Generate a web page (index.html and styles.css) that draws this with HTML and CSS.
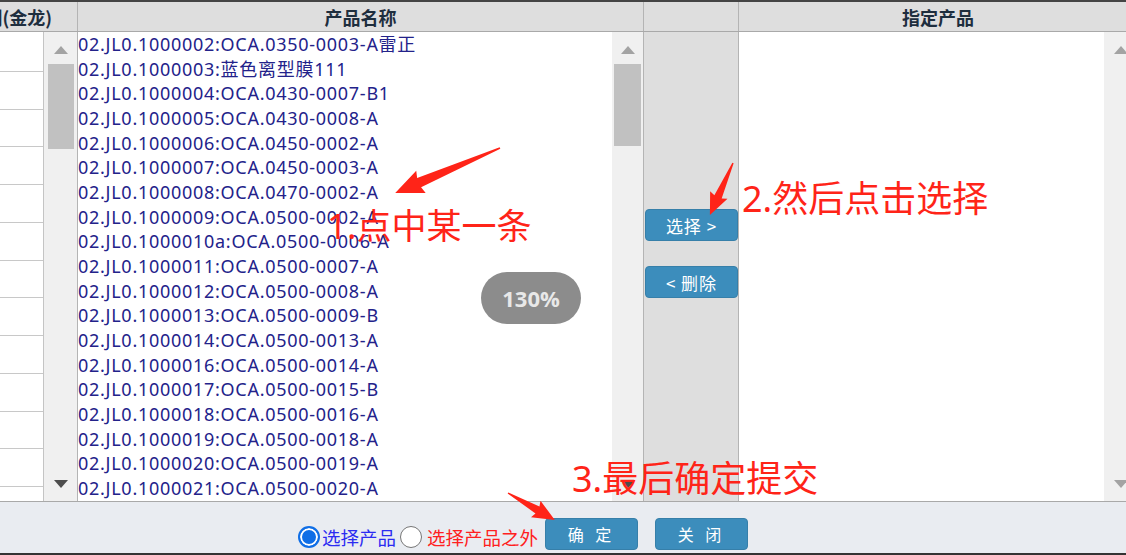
FILE: index.html
```html
<!DOCTYPE html>
<html lang="zh-CN">
<head>
    <meta charset="UTF-8">
    <title>指定产品</title>
    <link rel="stylesheet" href="styles.css">
</head>
<body>

<div class="window">
    <div class="topline"></div>

    <!-- 表头 -->
    <div class="grid head">
        <div class="cell col-type type-head"><span>产品类别(金龙)</span></div>
        <div class="cell col-list">产品名称</div>
        <div class="cell col-mid"></div>
        <div class="cell col-pick">指定产品</div>
    </div>

    <!-- 列表区 -->
    <div class="grid body">
        <div class="cell col-type type-body">
            <div class="type-rows">
                <div class="type-row"></div><div class="type-row"></div><div class="type-row"></div>
                <div class="type-row"></div><div class="type-row"></div><div class="type-row"></div>
                <div class="type-row"></div><div class="type-row"></div><div class="type-row"></div>
                <div class="type-row"></div><div class="type-row"></div><div class="type-row"></div>
                <div class="type-row"></div>
            </div>
            <div class="scrollbar wide">
                <span class="arrow up"></span>
                <span class="thumb tall"></span>
                <span class="arrow down"></span>
            </div>
        </div>

        <div class="cell col-list list-body">
            <ul class="items">
                <li>02.JL0.1000002:OCA.0350-0003-A雷正</li>
                <li>02.JL0.1000003:蓝色离型膜111</li>
                <li>02.JL0.1000004:OCA.0430-0007-B1</li>
                <li>02.JL0.1000005:OCA.0430-0008-A</li>
                <li>02.JL0.1000006:OCA.0450-0002-A</li>
                <li>02.JL0.1000007:OCA.0450-0003-A</li>
                <li>02.JL0.1000008:OCA.0470-0002-A</li>
                <li>02.JL0.1000009:OCA.0500-0002-A</li>
                <li>02.JL0.1000010a:OCA.0500-0006-A</li>
                <li>02.JL0.1000011:OCA.0500-0007-A</li>
                <li>02.JL0.1000012:OCA.0500-0008-A</li>
                <li>02.JL0.1000013:OCA.0500-0009-B</li>
                <li>02.JL0.1000014:OCA.0500-0013-A</li>
                <li>02.JL0.1000016:OCA.0500-0014-A</li>
                <li>02.JL0.1000017:OCA.0500-0015-B</li>
                <li>02.JL0.1000018:OCA.0500-0016-A</li>
                <li>02.JL0.1000019:OCA.0500-0018-A</li>
                <li>02.JL0.1000020:OCA.0500-0019-A</li>
                <li>02.JL0.1000021:OCA.0500-0020-A</li>
            </ul>
            <div class="scrollbar">
                <span class="arrow up"></span>
                <span class="thumb"></span>
                <span class="arrow down"></span>
            </div>
        </div>

        <div class="cell col-mid actions">
            <button class="btn btn-side">选择 &gt;</button>
            <button class="btn btn-side">&lt; 删除</button>
        </div>

        <div class="cell col-pick pick-body">
            <div class="picked"></div>
            <div class="scrollbar wide">
                <span class="arrow up light"></span>
                <span class="arrow down light"></span>
            </div>
        </div>
    </div>

    <!-- 底部按钮 -->
    <div class="footer">
        <label class="choice in">
            <span class="dot on"></span>选择产品
        </label>
        <label class="choice out">
            <span class="dot"></span>选择产品之外
        </label>
        <button class="btn btn-main">确 定</button>
        <button class="btn btn-main close">关 闭</button>
    </div>
    <div class="bottomline"></div>

    <!-- 标注 -->
    <svg class="marks" width="1126" height="555" viewBox="0 0 1126 555">
        <g fill="#ff2418">
            <path transform="translate(500,148) rotate(156.8)" d="M0,-0.8 L88,-5 L86,-12 L114,0 L86,12 L88,5 L0,0.8 Z"/>
            <path transform="translate(733,163) rotate(113.9)" d="M0,-0.7 L37,-4 L35,-9.5 L57,0 L35,9.5 L37,4 L0,0.7 Z"/>
            <path transform="translate(508,493) rotate(29.9)" d="M0,-0.7 L34,-4 L32,-9.5 L54,0 L32,9.5 L34,4 L0,0.7 Z"/>
        </g>
    </svg>
    <div class="note note-1">1.点中某一条</div>
    <div class="note note-2">2.然后点击选择</div>
    <div class="note note-3">3.最后确定提交</div>
    <div class="zoom">130%</div>
</div>

</body>
</html>
```

FILE: styles.css
```css
body {
    margin: 0;
    padding: 0;
    background-color: #fff;
    font-family: "Noto Sans", "Noto Sans CJK SC", sans-serif;
    overflow: hidden;
}
.window {
    position: relative;
    width: 1126px;
    height: 555px;
    overflow: hidden;
    display: flex;
    flex-direction: column;
}
.topline {
    height: 2px;
    background-color: #444;
}
.grid {
    display: grid;
    grid-template-columns: 78px 566px 95px 399px;
    width: 1138px;
}
.cell {
    border-right: 1px solid #b4b4b4;
    box-sizing: border-box;
}
.head {
    height: 30px;
    background-color: #dedede;
    border-bottom: 1px solid #a9a9a9;
    box-sizing: border-box;
}
.head .cell {
    display: flex;
    align-items: center;
    justify-content: center;
    font-family: "Noto Sans CJK SC", sans-serif;
    font-weight: bold;
    font-size: 18px;
    color: #1e2e3e;
}
.head .type-head {
    justify-content: flex-end;
    padding-right: 25px;
    overflow: hidden;
    white-space: nowrap;
}
.body {
    height: 470px;
    border-bottom: 1px solid #a9a9a9;
    box-sizing: border-box;
}
.body .cell {
    display: flex;
    overflow: hidden;
}

/* 左侧类别列 */
.type-rows {
    width: 44px;
    background-color: #fff;
    border-right: 1px solid #c4c4c4;
    box-sizing: border-box;
    padding-top: 2px;
}
.type-row {
    height: 37.75px;
    border-bottom: 1px solid #c8c8c8;
    box-sizing: border-box;
}

/* 滚动条 */
.scrollbar {
    width: 31px;
    background-color: #f0f0f0;
    display: flex;
    flex-direction: column;
    align-items: center;
    padding: 14px 0 13px;
    box-sizing: border-box;
    flex-shrink: 0;
}
.scrollbar.wide {
    width: 33px;
}
.arrow {
    width: 0;
    height: 0;
    border-left: 7.5px solid transparent;
    border-right: 7.5px solid transparent;
}
.arrow.up {
    border-bottom: 8px solid #a3a3a3;
}
.arrow.down {
    margin-top: auto;
    border-top: 8px solid #4d4d4d;
}
.arrow.down.light {
    border-top-color: #a3a3a3;
}
.thumb {
    width: 27px;
    height: 82px;
    margin-top: 10px;
    background-color: #c1c1c1;
}
.thumb.tall {
    width: 26px;
    height: 85px;
}

/* 产品列表 */
.list-body {
    background-color: #fff;
}
.items {
    list-style: none;
    margin: 0;
    padding: 0;
    flex: 1;
    font-size: 18px;
    letter-spacing: 0.72px;
    line-height: 24.67px;
    color: #23228a;
    white-space: nowrap;
}

/* 中间按钮列 */
.actions {
    background-color: #dedede;
    flex-direction: column;
    padding: 177px 0 0 1px;
    gap: 25px;
}
.btn {
    border: 1px solid #367fa9;
    border-radius: 4px;
    background-color: #3c8dbc;
    color: #fff;
    font-family: "Noto Sans CJK SC", sans-serif;
    cursor: pointer;
    padding: 0;
}
.btn-side {
    width: 93px;
    height: 32px;
    font-size: 17px;
    letter-spacing: 1px;
}

/* 右侧已选列 */
.pick-body {
    background-color: #fff;
}
.picked {
    flex: 1;
}

/* 底部 */
.footer {
    height: 51px;
    background-color: #e9ecf1;
    display: flex;
    align-items: center;
    padding: 16px 0 3px 298px;
    box-sizing: border-box;
}
.choice {
    display: flex;
    align-items: center;
    font-family: "Noto Sans CJK SC", sans-serif;
    font-size: 18.5px;
    margin-top: 6px;
}
.choice.in {
    color: #2b2bf2;
}
.choice.out {
    color: #ff2020;
    margin-left: 4px;
}
.dot {
    width: 22px;
    height: 22px;
    border-radius: 50%;
    border: 1.5px solid #767676;
    background-color: #fff;
    box-sizing: border-box;
    margin-right: 5px;
}
.dot.on {
    border: 2px solid #0f6ee6;
    background-color: #0f6ee6;
    box-shadow: inset 0 0 0 2px #fff;
    margin-right: 2px;
}
.btn-main {
    width: 93px;
    height: 32px;
    font-size: 16px;
    letter-spacing: 4px;
    margin-left: 7px;
}
.btn-main.close {
    margin-left: 17px;
}
.bottomline {
    flex: 1;
    background-color: #333;
}

/* 标注层 */
.marks {
    position: absolute;
    top: 0;
    left: 0;
    pointer-events: none;
}
.note {
    position: absolute;
    font-family: "Noto Sans", "Noto Sans CJK SC", sans-serif;
    font-size: 36px;
    line-height: 1;
    color: #ff2418;
    white-space: nowrap;
}
.note-1 {
    left: 327px;
    top: 208px;
    font-size: 35px;
}
.note-2 {
    left: 742px;
    top: 181px;
}
.note-3 {
    left: 572px;
    top: 461px;
}
.zoom {
    position: absolute;
    left: 481px;
    top: 272px;
    width: 100px;
    height: 52px;
    border-radius: 26px;
    background-color: #8c8c8c;
    color: #e8e8e8;
    font-family: "Open Sans", sans-serif;
    font-weight: bold;
    font-size: 22px;
    display: flex;
    align-items: center;
    justify-content: center;
}
```
